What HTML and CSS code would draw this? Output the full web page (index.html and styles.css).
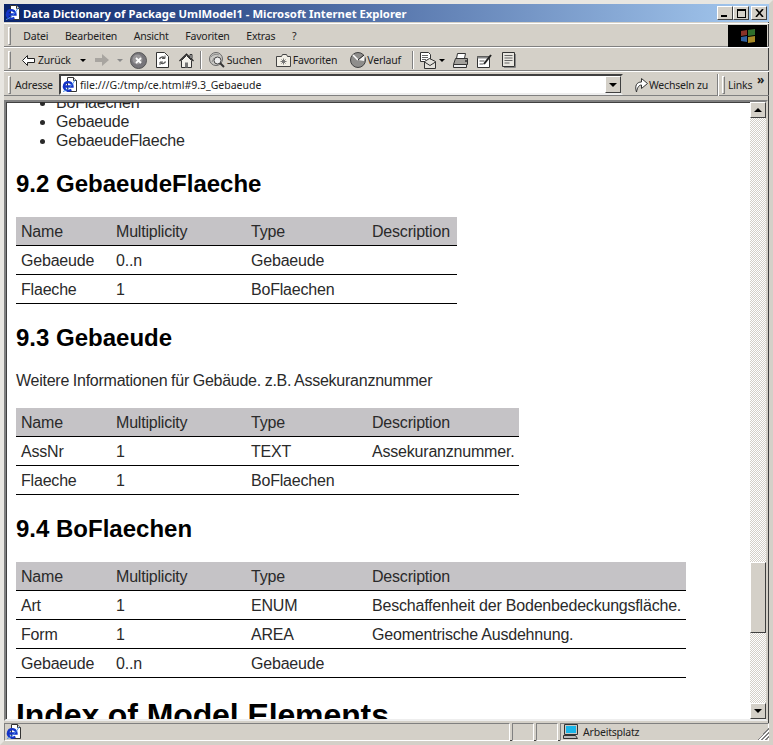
FILE: index.html
```html
<!DOCTYPE html>
<html lang="de">
<head>
  <meta charset="UTF-8" />
  <title>Data Dictionary of Package UmlModel1 - Microsoft Internet Explorer</title>
  <link rel="stylesheet" href="styles.css">
</head>
<body>
  <svg class="defs" width="0" height="0">
    <symbol id="ie-page" viewBox="0 0 16 16">
      <path d="M5.500.5h6l3 3v11h-9z" fill="#fff" stroke="#333"/>
      <path d="M11.500.5v3h3" fill="#ddd" stroke="#333"/>
      <path d="M2 9.500h8.500a4.300 4.300 0 1 0-1.300 3" fill="none" stroke="#1434c8" stroke-width="2.400"/>
      <path d="M1 14.500C4 14 10 9 13 3" fill="none" stroke="#4a90e8"/>
    </symbol>
  </svg>
  <div class="window">

    <div class="titlebar">
      <svg class="ie-icon" width="16" height="16"><use href="#ie-page"/></svg>
      <span class="title-text">Data Dictionary of Package UmlModel1 - Microsoft Internet Explorer</span>
      <div class="win-buttons">
        <button class="win-btn"><span class="min-glyph"></span></button>
        <button class="win-btn"><span class="max-glyph"></span></button>
        <button class="win-btn close-btn">
          <svg width="9" height="8" viewBox="0 0 9 8"><path d="M1 0l7 8M8 0l-7 8" stroke="#000" stroke-width="1.600"/></svg>
        </button>
      </div>
    </div>

    <div class="bar menubar">
      <span class="grip"></span>
      <span class="menu-item">Datei</span>
      <span class="menu-item">Bearbeiten</span>
      <span class="menu-item">Ansicht</span>
      <span class="menu-item">Favoriten</span>
      <span class="menu-item">Extras</span>
      <span class="menu-item">?</span>
      <div class="throbber">
        <svg width="20" height="18" viewBox="0 0 20 18"><path d="M3 4l6-1v5l-6 1z" fill="#8a3228"/><path d="M10 3l7-1v6l-7 1z" fill="#2f6e2c"/><path d="M3 10l6-1v6l-6-1z" fill="#2f5f9e"/><path d="M10 10l7-1v6l-7 1z" fill="#a88a26"/></svg>
      </div>
    </div>

    <div class="bar toolbar">
      <span class="grip"></span>
      <span class="tool back-tool">
        <svg width="13" height="11" viewBox="0 0 13 11"><path d="M5.500.5L.5 5.500l5 5V7.500h7v-4h-7z" fill="#fff" stroke="#222"/></svg>
        Zurück
      </span>
      <span class="caret back-caret"></span>
      <svg class="fwd-icon" width="14" height="12" viewBox="0 0 14 12"><path d="M7 0l7 6-7 6V8H0V4h7z" fill="#a8a5a0"/></svg>
      <span class="caret caret-off"></span>
      <svg class="stop-icon" width="17" height="17" viewBox="0 0 17 17"><circle cx="8.500" cy="8.500" r="8" fill="#77757a" stroke="#555"/><circle cx="7.500" cy="7.500" r="5" fill="#9a989a"/><path d="M6 6l5 5M11 6l-5 5" stroke="#fff" stroke-width="1.800"/></svg>
      <svg class="refresh-icon" width="13" height="16" viewBox="0 0 13 16"><path d="M.5.500h8l4 4v11H.5z" fill="#fff" stroke="#333"/><path d="M3.500 7a3 3 0 0 1 5-1M9.500 9.500a3 3 0 0 1-5 1" fill="none" stroke="#555" stroke-width="1.400"/><path d="M9 3.500v3H6M4 13v-3h3" fill="none" stroke="#555"/></svg>
      <svg class="home-icon" width="15" height="15" viewBox="0 0 15 15"><path d="M.5 8L7.500 1l7 7" fill="none" stroke="#222" stroke-width="1.200"/><path d="M2.500 7.500l5-5 5 5v7h-10z" fill="#f4f2ec" stroke="#333"/><path d="M6 14.500v-5h3v5z" fill="#777"/><path d="M11 1.500h2v4h-2z" fill="#ccc" stroke="#333"/></svg>
      <span class="sep sep-first"></span>
      <span class="tool search-tool">
        <svg width="16" height="16" viewBox="0 0 16 16"><circle cx="7" cy="7" r="6.500" fill="#c9c8c4" stroke="#666"/><circle cx="8.500" cy="8.500" r="3.500" fill="#eee" stroke="#444"/><path d="M2 5c2-3 6-3 8-2M3 10l2-4" fill="none" stroke="#8a8a88"/><path d="M11 11l4 4" stroke="#333" stroke-width="2"/></svg>
        Suchen
      </span>
      <span class="tool fav-tool">
        <svg width="15" height="13" viewBox="0 0 15 13"><path d="M.5 2.500h5l1-2h4l1 2h3v10H.5z" fill="#f2efe6" stroke="#444"/><path d="M7.500 4.500v6M4.500 7.500h6M5.500 5.500l4 4M9.500 5.500l-4 4" stroke="#777"/></svg>
        Favoriten
      </span>
      <span class="tool hist-tool">
        <svg width="16" height="16" viewBox="0 0 16 16"><circle cx="8" cy="8" r="7.500" fill="#8f8e8c" stroke="#444"/><path d="M8 8l7-5-1 6z" fill="#f4f4f2"/><path d="M8 8L3 3" stroke="#fff" stroke-width="1.600"/><path d="M8 8l6-5" stroke="#222"/></svg>
        Verlauf
      </span>
      <span class="sep sep-second"></span>
      <svg class="mail-icon" width="17" height="17" viewBox="0 0 17 17"><path d="M.5.500h8l2 2v7H.5z" fill="#fff" stroke="#333"/><path d="M2 3.500h6M2 5.500h6M2 7.500h4" stroke="#666"/><path d="M4.500 9.500l5-3 6 3v7h-11z" fill="#e4e2dc" stroke="#333"/><path d="M4.500 10l5.500 3.500 5.500-3.500" fill="none" stroke="#333"/></svg>
      <span class="caret mail-caret"></span>
      <svg class="print-icon" width="16" height="15" viewBox="0 0 16 15"><path d="M4.500.5h8l-1 5h-8z" fill="#fff" stroke="#333"/><path d="M2.500 5.500h12v6h-14z" fill="#a3a19c" stroke="#333"/><path d="M.5 11.500h13v3H.5z" fill="#eee" stroke="#333"/><circle cx="13" cy="8" r="1" fill="#333"/></svg>
      <svg class="edit-icon" width="15" height="15" viewBox="0 0 15 15"><path d="M.5 3.500h12v11H.5z" fill="#fff" stroke="#333"/><path d="M.5 3.500h12v2H.5z" fill="#888"/><path d="M2.500 8h5M2.500 11h4" stroke="#555"/><path d="M7 11l7-9" stroke="#222" stroke-width="2"/></svg>
      <svg class="talk-icon" width="15" height="16" viewBox="0 0 15 16"><path d="M.5.500h12v14H.5z" fill="#e8e6e0" stroke="#333"/><path d="M2.500 3.500h8M2.500 6h8M2.500 8.500h8M2.500 11h5" stroke="#666"/><path d="M13.500 2v13.500H2" fill="none" stroke="#888"/></svg>
    </div>

    <div class="bar addressbar">
      <span class="grip"></span>
      <span class="addr-label">Adresse</span>
      <div class="addr-field">
        <svg class="addr-icon" width="16" height="16"><use href="#ie-page"/></svg>
        <span class="addr-text">file:///G:/tmp/ce.html#9.3_Gebaeude</span>
        <button class="drop-btn"><span class="arrow-down"></span></button>
      </div>
      <span class="go-tool">
        <svg width="14" height="17" viewBox="0 0 14 17"><path d="M2.500 16C.5 10 2.500 6 7.500 6V2.500l6 5-6 5V9C5 9 3.500 11 2.500 16z" fill="#fff" stroke="#333"/></svg>
        Wechseln zu
      </span>
      <span class="divider"></span>
      <span class="grip links-grip"></span>
      <span class="links-label">Links</span>
      <span class="chevrons">»</span>
    </div>

    <div class="viewport">
      <main class="page">
        <ul class="plain-list">
          <li>BoFlaechen</li>
          <li>Gebaeude</li>
          <li>GebaeudeFlaeche</li>
        </ul>

        <h2>9.2 GebaeudeFlaeche</h2>
        <table>
          <thead>
            <tr><th>Name</th><th>Multiplicity</th><th>Type</th><th>Description</th></tr>
          </thead>
          <tbody>
            <tr><td>Gebaeude</td><td>0..n</td><td>Gebaeude</td><td></td></tr>
            <tr><td>Flaeche</td><td>1</td><td>BoFlaechen</td><td></td></tr>
          </tbody>
        </table>

        <h2>9.3 Gebaeude</h2>
        <p>Weitere Informationen für Gebäude. z.B. Assekuranznummer</p>
        <table>
          <thead>
            <tr><th>Name</th><th>Multiplicity</th><th>Type</th><th>Description</th></tr>
          </thead>
          <tbody>
            <tr><td>AssNr</td><td>1</td><td>TEXT</td><td>Assekuranznummer.</td></tr>
            <tr><td>Flaeche</td><td>1</td><td>BoFlaechen</td><td></td></tr>
          </tbody>
        </table>

        <h2>9.4 BoFlaechen</h2>
        <table>
          <thead>
            <tr><th>Name</th><th>Multiplicity</th><th>Type</th><th>Description</th></tr>
          </thead>
          <tbody>
            <tr><td>Art</td><td>1</td><td>ENUM</td><td>Beschaffenheit der Bodenbedeckungsfläche.</td></tr>
            <tr><td>Form</td><td>1</td><td>AREA</td><td>Geomentrische Ausdehnung.</td></tr>
            <tr><td>Gebaeude</td><td>0..n</td><td>Gebaeude</td><td></td></tr>
          </tbody>
        </table>

        <h1>Index of Model Elements</h1>
      </main>
      <div class="scrollbar">
        <button class="scroll-btn"><span class="arrow-up"></span></button>
        <div class="track">
          <div class="thumb"></div>
        </div>
        <button class="scroll-btn"><span class="arrow-down"></span></button>
      </div>
    </div>

    <div class="statusbar">
      <span class="status-cell status-main">
        <svg width="16" height="16"><use href="#ie-page"/></svg>
      </span>
      <span class="status-cell status-small"></span>
      <span class="status-cell status-small"></span>
      <span class="status-cell status-zone">
        <svg width="17" height="16" viewBox="0 0 17 16"><path d="M2.500.5h13v10h-13z" fill="#c8c8c4" stroke="#333"/><path d="M4 2h10v7H4z" fill="#19b5e8"/><path d="M1.500 11.500h12l2 3h-14z" fill="#bbb" stroke="#333"/></svg>
        Arbeitsplatz
      </span>
      <span class="resize-grip"></span>
    </div>

  </div>
</body>
</html>
```

FILE: styles.css
```css
html, body {
  margin: 0;
  padding: 0;
  height: 100%;
  overflow: hidden;
}
body {
  font-family: "Liberation Sans", Arial, sans-serif;
  background: #d4d0c8;
  color: #000;
}
.defs {
  position: absolute;
}
.window {
  box-sizing: border-box;
  width: 773px;
  height: 745px;
  display: flex;
  flex-direction: column;
  background: #d4d0c8;
  border: 4px solid #d4d0c8;
  border-top-color: #e8e6e1;
  border-left-color: #e8e6e1;
  box-shadow: inset -1px -1px 0 #404040;
  font-size: 11px;
}

/* title bar */
.titlebar {
  height: 18px;
  flex-shrink: 0;
  display: flex;
  align-items: center;
  gap: 2px;
  padding: 0 2px 0 1px;
  background: linear-gradient(to right, #0a246a, #a6caf0);
  color: white;
}
.title-text {
  font-family: "Noto Sans", sans-serif;
  font-weight: 700;
  font-size: 11.3px;
  white-space: nowrap;
}
.win-buttons {
  margin-left: auto;
  display: flex;
}
.win-btn {
  box-sizing: border-box;
  width: 16px;
  height: 14px;
  padding: 0;
  display: flex;
  align-items: center;
  justify-content: center;
  background: #d4d0c8;
  border: 1px solid;
  border-color: #fff #404040 #404040 #fff;
}
.close-btn {
  margin-left: 2px;
}
.min-glyph {
  width: 6px;
  height: 2px;
  background: #000;
  margin-top: 6px;
  margin-right: 2px;
}
.max-glyph {
  box-sizing: border-box;
  width: 9px;
  height: 9px;
  border: 1px solid #000;
  border-top-width: 2px;
}

/* bars */
.bar {
  flex-shrink: 0;
  display: flex;
  align-items: center;
  box-sizing: border-box;
  padding-top: 2px;
  border-top: 1px solid #fff;
  border-bottom: 1px solid #808080;
  font-family: "Noto Sans", sans-serif;
  font-size: 10.5px;
  letter-spacing: -0.2px;
  color: #222;
}
.grip {
  flex-shrink: 0;
  box-sizing: border-box;
  width: 3px;
  height: 18px;
  margin: 0 4px;
  border: 1px solid;
  border-color: #fff #808080 #808080 #fff;
}
.menubar {
  height: 24px;
  margin-top: 1px;
}
.menu-item {
  margin: 0 8.3px;
  white-space: nowrap;
}
.menu-item:first-of-type {
  margin-left: 7px;
}
.throbber {
  margin-left: auto;
  margin-right: 2px;
  width: 39px;
  height: 22px;
  background: #000;
  display: flex;
  align-items: center;
  justify-content: center;
}
.toolbar {
  height: 24px;
}
.tool {
  display: flex;
  align-items: center;
  white-space: nowrap;
}
.back-tool {
  margin-left: 7px;
  gap: 3px;
}
.caret {
  width: 0;
  height: 0;
  border-left: 3px solid transparent;
  border-right: 3px solid transparent;
  border-top: 3px solid #000;
}
.back-caret {
  margin-left: 9px;
}
.caret-off {
  border-top-color: #8a8a8a;
  margin-left: 8px;
}
.fwd-icon {
  margin-left: 9px;
}
.stop-icon {
  margin-left: 7px;
}
.refresh-icon {
  margin-left: 9px;
}
.home-icon {
  margin-left: 10px;
}
.sep {
  width: 1px;
  height: 18px;
  background: #808080;
  box-shadow: 1px 0 0 #fff;
}
.sep-first {
  margin: 0 8px 0 6px;
}
.sep-second {
  margin: 0 7px 0 11px;
}
.search-tool {
  gap: 2px;
}
.fav-tool {
  margin-left: 14px;
  gap: 2px;
}
.hist-tool {
  margin-left: 13px;
  gap: 1px;
}
.mail-caret {
  margin-left: 2px;
}
.print-icon {
  margin-left: 8px;
}
.edit-icon {
  margin-left: 8px;
}
.talk-icon {
  margin-left: 10px;
}
.addressbar {
  height: 25px;
}
.addr-label {
  width: 44px;
}
.addr-field {
  box-sizing: border-box;
  width: 564px;
  height: 21px;
  display: flex;
  align-items: center;
  background: white;
  border: 2px solid;
  border-color: #404040 #d4d0c8 #eee #404040;
}
.addr-icon {
  margin: 0 2px 0 1px;
}
.addr-text {
  flex: 1;
  white-space: nowrap;
  letter-spacing: 0;
}
.drop-btn {
  box-sizing: border-box;
  width: 16px;
  height: 17px;
  padding: 0;
  display: flex;
  align-items: center;
  justify-content: center;
  background: #d4d0c8;
  border: 1px solid;
  border-color: #fff #404040 #404040 #fff;
}
.arrow-down, .arrow-up {
  width: 0;
  height: 0;
  border-left: 4px solid transparent;
  border-right: 4px solid transparent;
}
.arrow-down {
  border-top: 4px solid #000;
}
.arrow-up {
  border-bottom: 4px solid #000;
}
.go-tool {
  width: 83px;
  display: flex;
  align-items: center;
  gap: 1px;
  margin-left: 11px;
  white-space: nowrap;
}
.divider {
  width: 1px;
  height: 22px;
  background: #808080;
  box-shadow: 1px 0 0 #fff;
}
.links-grip {
  margin: 0 3px 0 4px;
}
.links-label {
  width: 29px;
  white-space: nowrap;
}
.chevrons {
  margin-top: -10px;
  font-weight: 700;
  font-size: 12px;
}

/* content area */
.viewport {
  flex: 1;
  min-height: 0;
  margin: 4px 1px 0 0;
  display: flex;
  background: white;
  border: 2px solid;
  border-color: #808080 #d4d0c8 #eee #808080;
  box-shadow: inset 1px 1px 0 #404040;
}
.page {
  flex: 1;
  min-width: 0;
  overflow: hidden;
  padding-left: 10px;
  font-size: 16px;
  letter-spacing: -0.2px;
  color: #2a2a2a;
}
.plain-list {
  margin: -9px 0 0;
  padding-left: 40px;
  line-height: 19px;
}
h2 {
  margin: 20px 0 19px;
  font-size: 24px;
  line-height: 28px;
  color: #000;
  letter-spacing: 0;
}
.page p {
  margin: 0 0 18px;
  line-height: 19px;
  letter-spacing: -0.25px;
  word-spacing: -0.5px;
}
table {
  border-collapse: collapse;
}
th, td {
  padding: 6px 5px 4px;
  line-height: 18px;
  font-weight: 400;
  text-align: left;
  white-space: nowrap;
  border-bottom: 1px solid #000;
}
th:nth-child(1) {
  width: 85px;
}
th:nth-child(2) {
  width: 125px;
}
th:nth-child(3) {
  width: 111px;
}
th:nth-child(4) {
  min-width: 80px;
}
thead tr {
  background: #c5c3c6;
}
h1 {
  margin: 19px 0 0;
  font-size: 32px;
  line-height: 37px;
  white-space: nowrap;
  color: #000;
  letter-spacing: -0.1px;
}

/* scrollbar */
.scrollbar {
  width: 16px;
  flex-shrink: 0;
  display: flex;
  flex-direction: column;
  background: repeating-conic-gradient(#d4d0c8 0 25%, #fff 0 50%) 0 0 / 2px 2px;
}
.scroll-btn {
  box-sizing: border-box;
  width: 16px;
  height: 16px;
  padding: 0;
  flex-shrink: 0;
  display: flex;
  align-items: center;
  justify-content: center;
  background: #d4d0c8;
  border: 1px solid;
  border-color: #fff #404040 #404040 #fff;
}
.track {
  flex: 1;
  display: flex;
  flex-direction: column;
  justify-content: flex-end;
  padding-bottom: 70px;
}
.thumb {
  box-sizing: border-box;
  height: 71px;
  background: #d4d0c8;
  border: 1px solid;
  border-color: #fff #404040 #404040 #fff;
}

/* status bar */
.statusbar {
  position: relative;
  height: 20px;
  flex-shrink: 0;
  display: flex;
  gap: 2px;
  padding-top: 2px;
  box-sizing: border-box;
  font-family: "Noto Sans", sans-serif;
  font-size: 10.5px;
  letter-spacing: -0.2px;
  color: #222;
}
.status-cell {
  box-sizing: border-box;
  display: flex;
  align-items: center;
  border: 1px solid;
  border-color: #808080 #fff #fff #808080;
}
.status-main {
  flex: 1;
  padding-left: 1px;
}
.status-small {
  width: 22px;
}
.status-zone {
  width: 209px;
  gap: 4px;
  padding-left: 1px;
}
.resize-grip {
  position: absolute;
  right: 0;
  bottom: 1px;
  width: 12px;
  height: 12px;
  background: linear-gradient(135deg, transparent 0 50%, #808080 50% 58%, #fff 58% 66%, #808080 66% 74%, #fff 74% 82%, #808080 82% 90%, transparent 90%);
}
```
